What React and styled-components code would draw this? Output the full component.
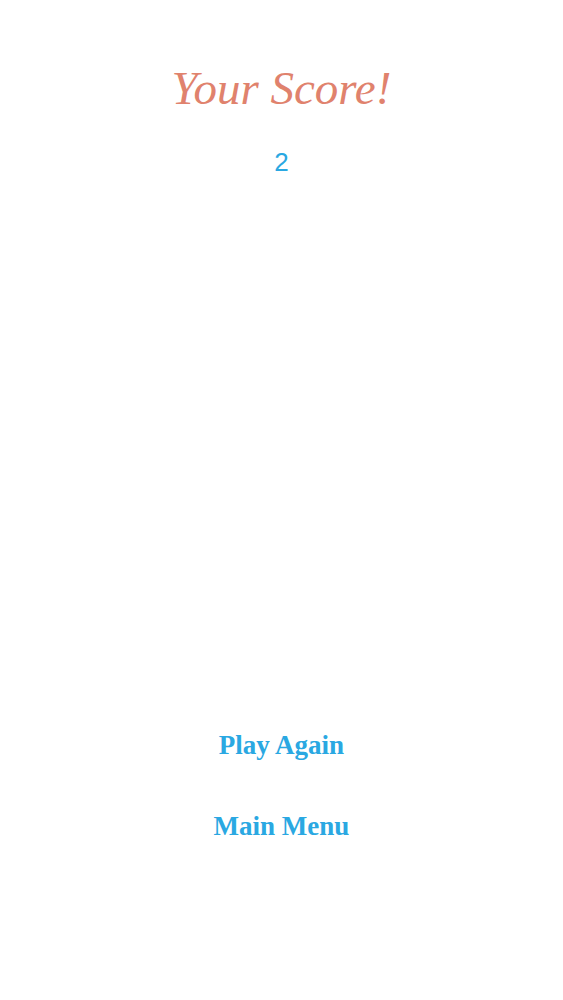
import React from "react";
import styled, { createGlobalStyle } from "styled-components";

const Global = createGlobalStyle`
  html, body { margin: 0; padding: 0; background: #ffffff; }
  #root { min-height: 100vh; }
`;

const Screen = styled.main`
  min-height: 100vh;
  display: flex;
  flex-direction: column;
  align-items: center;
  box-sizing: border-box;
  padding: 62px 0 157px;
`;

const Title = styled.h1`
  margin: 0;
  font-family: "Liberation Serif", "Times New Roman", serif;
  font-style: italic;
  font-weight: 400;
  font-size: 47px;
  line-height: 52px;
  color: #e0826d;
`;

const Score = styled.div`
  margin-top: 33px;
  font-family: "Liberation Sans", Arial, sans-serif;
  font-size: 26px;
  line-height: 30px;
  color: #2aa8e2;
`;

const Actions = styled.nav`
  margin-top: auto;
  display: flex;
  flex-direction: column;
  align-items: center;
  gap: 48px;
`;

const ActionButton = styled.button`
  border: none;
  background: none;
  padding: 0;
  cursor: pointer;
  font-family: "Liberation Serif", "Times New Roman", serif;
  font-weight: 700;
  font-size: 27px;
  line-height: 33px;
  color: #2aa8e2;
`;

export default function App() {
  return (
    <>
      <Global />
      <Screen>
        <Title>Your Score!</Title>
        <Score>2</Score>
        <Actions>
          <ActionButton>Play Again</ActionButton>
          <ActionButton>Main Menu</ActionButton>
        </Actions>
      </Screen>
    </>
  );
}
